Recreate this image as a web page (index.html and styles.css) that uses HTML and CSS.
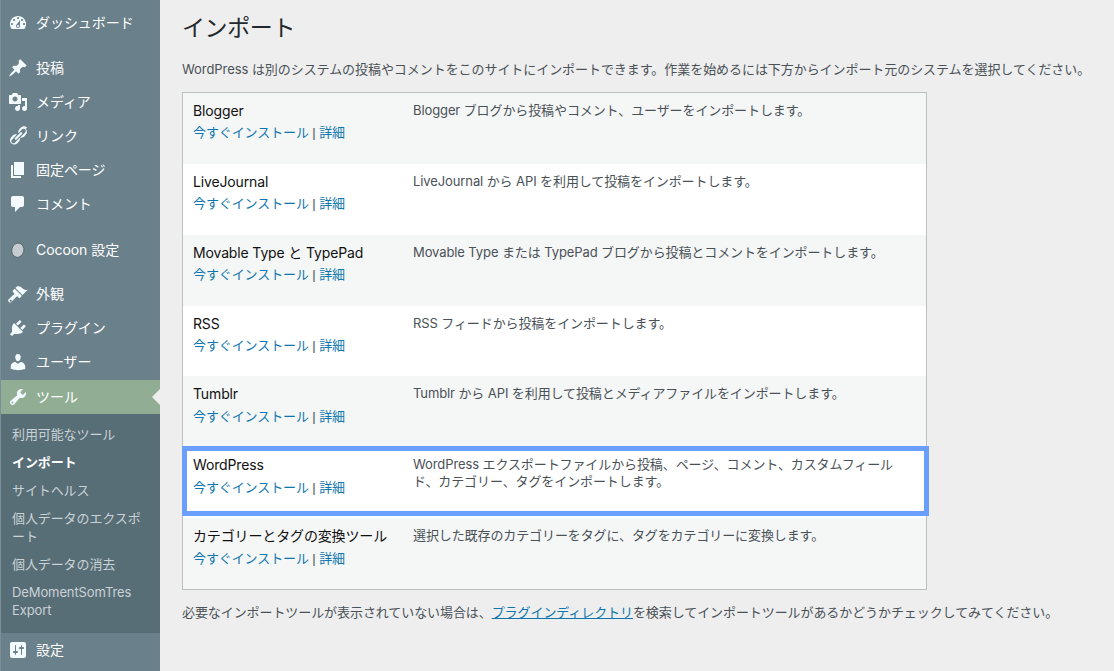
FILE: index.html
```html
<!DOCTYPE html>
<html lang="ja">
<head>
<meta charset="utf-8">
<title>インポート</title>
<link rel="stylesheet" href="styles.css">
</head>
<body>
<div class="page">
<nav class="sidebar">
  <ul class="menu menu-first">
    <li class="item"><svg class="ico" viewBox="0 0 20 20"><path d="M3.76 16h12.48c1.1-1.37 1.76-3.11 1.76-5 0-4.42-3.58-8-8-8s-8 3.58-8 8c0 1.89.66 3.63 1.76 5zM10 4c.55 0 1 .45 1 1s-.45 1-1 1-1-.45-1-1 .45-1 1-1zM6 6c.55 0 1 .45 1 1s-.45 1-1 1-1-.45-1-1 .45-1 1-1zm8 0c.55 0 1 .45 1 1s-.45 1-1 1-1-.45-1-1 .45-1 1-1zm-5.37 5.55L12 7v6c0 1.1-.9 2-2 2s-2-.9-2-2c0-.57.24-1.08.63-1.45zM4 10c.55 0 1 .45 1 1s-.45 1-1 1-1-.45-1-1 .45-1 1-1zm12 0c.55 0 1 .45 1 1s-.45 1-1 1-1-.45-1-1 .45-1 1-1zm-5 3c0-.55-.45-1-1-1s-1 .45-1 1 .45 1 1 1 1-.45 1-1z" fill-rule="evenodd"/></svg><span>ダッシュボード</span></li>
  </ul>
  <ul class="menu menu-posts">
    <li class="item"><svg class="ico" viewBox="0 0 20 20"><path d="M10.44 3.02l1.82-1.82 6.36 6.35-1.83 1.82c-1.05-.68-2.48-.57-3.41.36l-.75.75c-.92.93-1.04 2.35-.35 3.41l-1.83 1.82-2.41-2.41-2.8 2.79c-.42.42-3.38 2.71-3.8 2.29s1.86-3.39 2.28-3.81l2.79-2.79L4.1 9.36l1.83-1.82c1.05.69 2.48.57 3.4-.36l.75-.75c.93-.92 1.05-2.35.36-3.41z"/></svg><span>投稿</span></li>
    <li class="item"><svg class="ico" viewBox="0 0 20 20"><path fill-rule="evenodd" d="M13 11V4c0-.55-.45-1-1-1h-1.67L9 1H5L3.67 3H2c-.55 0-1 .45-1 1v7c0 .55.45 1 1 1h10c.55 0 1-.45 1-1zM7 4.5c1.38 0 2.5 1.12 2.5 2.5S8.38 9.5 7 9.5 4.5 8.38 4.5 7 5.62 4.5 7 4.5zM14 6h5v10.5c0 1.38-1.12 2.5-2.5 2.5S14 17.88 14 16.5s1.12-2.5 2.5-2.5c.17 0 .34.02.5.05V9h-3V6zm-4 8.05V13h2v3.5c0 1.38-1.12 2.5-2.5 2.5S7 17.88 7 16.5 8.12 14 9.5 14c.17 0 .34.02.5.05z"/></svg><span>メディア</span></li>
    <li class="item"><svg class="ico" viewBox="0 0 20 20"><path d="M17.74 2.76c1.68 1.69 1.68 4.41 0 6.1l-1.53 1.52c-1.12 1.12-2.7 1.49-4.14 1.13l2.08-2.08.76-.76.76-.76 1.53-1.52c.84-.84.84-2.2 0-3.04-.84-.85-2.2-.85-3.04 0l-.76.76-3.05 3.04c-.37-1.44 0-3.01 1.14-4.13l1.52-1.53c1.69-1.68 4.41-1.68 6.1-.01zM8.59 13.43l5.34-5.34c.42-.42.42-1.1 0-1.52-.44-.43-1.13-.39-1.53 0l-5.33 5.34c-.42.42-.42 1.1 0 1.52.44.43 1.13.39 1.52 0zm-.76 2.29l4.14-4.15c.38 1.44 0 3.02-1.14 4.14l-1.52 1.53c-1.69 1.68-4.41 1.68-6.1 0-1.68-1.68-1.68-4.42 0-6.1l1.53-1.52c1.12-1.12 2.7-1.49 4.14-1.13L4.7 12.88l-.76.76c-.84.84-.84 2.2 0 3.05.84.84 2.2.84 3.04 0z"/></svg><span>リンク</span></li>
    <li class="item"><svg class="ico" viewBox="0 0 20 20"><path d="M6 15V2h10v13H6zm-1 1h8v2H3V5h2v11z"/></svg><span>固定ページ</span></li>
    <li class="item"><svg class="ico" viewBox="0 0 20 20"><path d="M5 2h9c1.1 0 2 .9 2 2v7c0 1.1-.9 2-2 2h-2l-5 5v-5H5c-1.1 0-2-.9-2-2V4c0-1.1.9-2 2-2z"/></svg><span>コメント</span></li>
  </ul>
  <ul class="menu menu-cocoon">
    <li class="item"><svg class="ico" viewBox="0 0 20 20"><ellipse class="cocoon" cx="9.8" cy="10.2" rx="6" ry="7.2" transform="rotate(12 9.8 10.2)"/></svg><span>Cocoon 設定</span></li>
  </ul>
  <ul class="menu menu-look">
    <li class="item"><svg class="ico" viewBox="0 0 20 20"><path d="M14.48 11.06L7.41 3.99l1.5-1.5c.5-.56 2.3-.47 3.51.32 1.21.8 1.43 1.28 2.91 2.1 1.18.64 2.45 1.26 4.45.85zm-.71.71L6.7 4.7 4.93 6.47c-.39.39-.39 1.02 0 1.41l1.06 1.06c.39.39.39 1.03 0 1.42-.6.6-5.24 4.9-5.24 4.9-.7.7-.7 1.9.05 2.65.75.75 1.95.75 2.65.05 0 0 4.3-4.64 4.9-5.24.39-.39 1.03-.39 1.42 0l1.06 1.06c.39.39 1.02.39 1.41 0zM3.5 17.5c-.45.45-1.05.45-1.45.05-.4-.4-.4-1 .05-1.45.4-.4 1-.4 1.4 0 .4.4.4 1 0 1.4z" fill-rule="evenodd"/></svg><span>外観</span></li>
    <li class="item"><svg class="ico" viewBox="0 0 20 20"><path d="M13.11 4.36L9.87 7.6 8 5.73l3.24-3.24c.35-.34 1.05-.2 1.56.32.52.51.66 1.21.31 1.55zm-8 1.77l.91-1.12 9.01 9.01-1.19.84c-.71.71-2.63 1.16-3.82 1.16H6.14L4.9 17.26c-.59.59-1.54.59-2.12 0-.59-.58-.59-1.53 0-2.12l1.24-1.24v-3.88c0-1.13.4-3.19 1.09-3.89zm7.26 3.97l3.24-3.24c.34-.35 1.04-.21 1.55.31.52.51.66 1.21.31 1.55l-3.24 3.25z"/></svg><span>プラグイン</span></li>
    <li class="item"><svg class="ico" viewBox="0 0 20 20"><path d="M10 9.25c-2.27 0-2.73-3.44-2.73-3.44C7 4.02 7.82 2 9.97 2c2.16 0 2.98 2.02 2.71 3.81 0 0-.41 3.44-2.68 3.44zm0 2.57L12.72 10c2.39 0 4.52 2.33 4.52 4.53v2.49s-3.65 1.13-7.24 1.13c-3.65 0-7.24-1.13-7.24-1.13v-2.49c0-2.25 1.94-4.48 4.47-4.48z"/></svg><span>ユーザー</span></li>
    <li class="item item-active"><svg class="ico" viewBox="0 0 20 20"><path fill-rule="evenodd" d="M16.68 9.77c-1.34 1.34-3.3 1.67-4.95.99l-5.41 6.52c-.99.99-2.59.99-3.58 0s-.99-2.59 0-3.57l6.52-5.42c-.68-1.65-.35-3.61.99-4.95 1.28-1.28 3.12-1.62 4.72-1.06l-2.89 2.89 2.82 2.82 2.86-2.87c.53 1.58.18 3.39-1.08 4.65zM3.81 16.21c.4.39 1.04.39 1.43 0 .4-.4.4-1.04 0-1.43-.39-.4-1.03-.4-1.43 0-.39.39-.39 1.03 0 1.43z"/></svg><span>ツール</span></li>
  </ul>
  <ul class="submenu">
    <li>利用可能なツール</li>
    <li class="sub-current">インポート</li>
    <li>サイトヘルス</li>
    <li>個人データのエクスポート</li>
    <li>個人データの消去</li>
    <li>DeMomentSomTres Export</li>
  </ul>
  <ul class="menu">
    <li class="item"><svg class="ico" viewBox="0 0 20 20"><path fill-rule="evenodd" d="M18 16V4c0-1.1-.9-2-2-2H4c-1.1 0-2 .9-2 2v12c0 1.1.9 2 2 2h12c1.1 0 2-.9 2-2zM8 11h1c.55 0 1 .45 1 1s-.45 1-1 1H8v1.5c0 .28-.22.5-.5.5s-.5-.22-.5-.5V13H6c-.55 0-1-.45-1-1s.45-1 1-1h1V5.5c0-.28.22-.5.5-.5s.5.22.5.5V11zm5-2h-1c-.55 0-1-.45-1-1s.45-1 1-1h1V5.5c0-.28.22-.5.5-.5s.5.22.5.5V7h1c.55 0 1 .45 1 1s-.45 1-1 1h-1v5.5c0 .28-.22.5-.5.5s-.5-.22-.5-.5V9z"/></svg><span>設定</span></li>
  </ul>
</nav>
<main class="content">
  <h1 class="title">インポート</h1>
  <p class="intro">WordPress は別のシステムの投稿やコメントをこのサイトにインポートできます。作業を始めるには下方からインポート元のシステムを選択してください。</p>
  <div class="importers">
    <div class="row row-alt">
      <div class="cell-name"><div class="name">Blogger</div><div class="actions"><a>今すぐインストール</a> | <a>詳細</a></div></div>
      <div class="cell-desc">Blogger ブログから投稿やコメント、ユーザーをインポートします。</div>
    </div>
    <div class="row">
      <div class="cell-name"><div class="name">LiveJournal</div><div class="actions"><a>今すぐインストール</a> | <a>詳細</a></div></div>
      <div class="cell-desc">LiveJournal から API を利用して投稿をインポートします。</div>
    </div>
    <div class="row row-alt">
      <div class="cell-name"><div class="name">Movable Type と TypePad</div><div class="actions"><a>今すぐインストール</a> | <a>詳細</a></div></div>
      <div class="cell-desc">Movable Type または TypePad ブログから投稿とコメントをインポートします。</div>
    </div>
    <div class="row">
      <div class="cell-name"><div class="name">RSS</div><div class="actions"><a>今すぐインストール</a> | <a>詳細</a></div></div>
      <div class="cell-desc">RSS フィードから投稿をインポートします。</div>
    </div>
    <div class="row row-alt">
      <div class="cell-name"><div class="name">Tumblr</div><div class="actions"><a>今すぐインストール</a> | <a>詳細</a></div></div>
      <div class="cell-desc">Tumblr から API を利用して投稿とメディアファイルをインポートします。</div>
    </div>
    <div class="row row-marked">
      <div class="cell-name"><div class="name">WordPress</div><div class="actions"><a>今すぐインストール</a> | <a>詳細</a></div></div>
      <div class="cell-desc">WordPress エクスポートファイルから投稿、ページ、コメント、カスタムフィールド、カテゴリー、タグをインポートします。</div>
    </div>
    <div class="row row-alt">
      <div class="cell-name"><div class="name">カテゴリーとタグの変換ツール</div><div class="actions"><a>今すぐインストール</a> | <a>詳細</a></div></div>
      <div class="cell-desc">選択した既存のカテゴリーをタグに、タグをカテゴリーに変換します。</div>
    </div>
  </div>
  <p class="outro">必要なインポートツールが表示されていない場合は、<a class="plain-link">プラグインディレクトリ</a>を検索してインポートツールがあるかどうかチェックしてみてください。</p>
</main>
</div>
</body>
</html>
```
FILE: styles.css
```css
* { box-sizing: border-box; }
html, body { margin: 0; padding: 0; height: 100%; overflow: hidden; }
body {
  background: #eeeeee;
  color: #4a5157;
  font-family: "Inter", "Noto Sans CJK JP", sans-serif;
  font-size: 13px;
  letter-spacing: -0.06px;
}
ul { list-style: none; margin: 0; padding: 0; }
.page { display: flex; height: 671px; }

.sidebar {
  width: 160px;
  flex: none;
  background: #6a808a;
  border-left: 1px solid #7b8f98;
  padding-top: 6px;
}
.menu-posts { margin-top: 11px; }
.menu-cocoon { margin-top: 12px; }
.menu-look { margin-top: 10px; }
.item {
  display: flex;
  align-items: center;
  height: 34px;
  padding-left: 7px;
  color: #fff;
  font-size: 14px;
}
.item span { margin-left: 8px; position: relative; top: -1px; }
.ico { width: 20px; height: 20px; fill: #f4fbff; flex: none; }
.cocoon { fill: #c4cccf; stroke: #46535a; stroke-width: .7; }
.item-active { background: #91ae94; position: relative; margin-top: 1px; }
.item-active::after {
  content: "";
  position: absolute;
  right: 0;
  top: 50%;
  margin-top: -8px;
  border: 8px solid transparent;
  border-right-color: #eeeeee;
  border-left-width: 0;
}
.submenu {
  background: #586e76;
  color: #c9d2d6;
  height: 219px;
  padding: 6px 0 0 11px;
  font-size: 13px;
  line-height: 18px;
  letter-spacing: -0.1px;
}
.submenu li { padding: 5px 12px 5px 0; }
.submenu .sub-current { color: #fff; font-weight: 700; }

.content { flex: 1; padding: 0 22px; min-width: 0; }
.title {
  margin: 0;
  padding-top: 12px;
  font-size: 23px;
  font-weight: 400;
  line-height: 32px;
  color: #23282d;
  letter-spacing: -0.4px;
}
.intro { margin: 15px 0 0; line-height: 20px; white-space: nowrap; }
.importers {
  width: 745px;
  margin-top: 13px;
  border: 1px solid #bdbebf;
  background: #fff;
}
.row {
  display: grid;
  grid-template-columns: 220px 1fr;
  height: 70.86px;
  background: #fff;
  position: relative;
}
.row-alt { background: #f5f6f6; }
.row-marked::after {
  content: "";
  position: absolute;
  left: -1px;
  right: -3px;
  top: -1px;
  bottom: 2px;
  border: 5px solid #6a9eff;
  pointer-events: none;
}
.cell-name { padding: 8px 0 0 10px; }
.cell-desc { padding: 9px 28px 0 10px; line-height: 17px; letter-spacing: -0.1px; }
.name { color: #111; font-size: 14px; line-height: 20px; letter-spacing: -0.14px; }
.actions {
  margin-top: 2.4px;
  line-height: 20px;
  font-family: "Liberation Sans", "Noto Sans CJK JP", sans-serif;
  letter-spacing: -0.1px;
}
.actions a { color: #0f76ad; }
.outro { margin: 12px 0 0; line-height: 20px; white-space: nowrap; letter-spacing: -0.08px; }
.plain-link { color: #0f76ad; text-decoration: underline; }
```
